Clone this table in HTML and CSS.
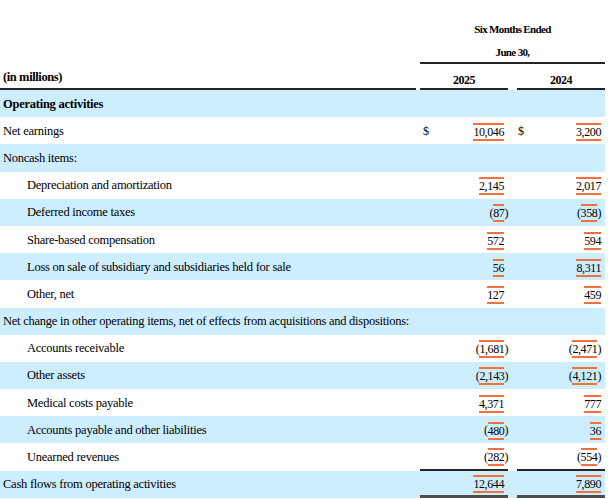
FILE: index.html
```html
<!DOCTYPE html>
<html lang="en">
<head>
<meta charset="utf-8">
<title>Cash flows</title>
<link rel="stylesheet" href="styles.css">
</head>
<body>
<div class="sheet">
  <div class="hrow h1"><div></div><div class="period">Six Months Ended</div></div>
  <div class="hrow h2"><div></div><div class="period ruled">June 30,</div></div>
  <div class="hrow h3"><div class="unit">(in millions)</div><div class="yr c1">2025</div><div class="yr c2">2024</div></div>

  <div class="row blue"><div class="lbl bold">Operating activities</div><div class="v c1"></div><div class="v c2"></div></div>
  <div class="row"><div class="lbl">Net earnings</div><div class="v c1"><span class="cur">$</span><span class="tag">10,046</span></div><div class="v c2"><span class="cur">$</span><span class="tag">3,200</span></div></div>
  <div class="row blue"><div class="lbl">Noncash items:</div><div class="v c1"></div><div class="v c2"></div></div>
  <div class="row"><div class="lbl ind">Depreciation and amortization</div><div class="v c1"><span class="tag">2,145</span></div><div class="v c2"><span class="tag">2,017</span></div></div>
  <div class="row blue"><div class="lbl ind">Deferred income taxes</div><div class="v c1">(<span class="tag">87</span><span class="cp">)</span></div><div class="v c2">(<span class="tag">358</span><span class="cp">)</span></div></div>
  <div class="row"><div class="lbl ind">Share-based compensation</div><div class="v c1"><span class="tag">572</span></div><div class="v c2"><span class="tag">594</span></div></div>
  <div class="row blue"><div class="lbl ind">Loss on sale of subsidiary and subsidiaries held for sale</div><div class="v c1"><span class="tag">56</span></div><div class="v c2"><span class="tag">8,311</span></div></div>
  <div class="row"><div class="lbl ind">Other, net</div><div class="v c1"><span class="tag">127</span></div><div class="v c2"><span class="tag">459</span></div></div>
  <div class="row blue"><div class="lbl">Net change in other operating items, net of effects from acquisitions and dispositions:</div><div class="v c1"></div><div class="v c2"></div></div>
  <div class="row"><div class="lbl ind">Accounts receivable</div><div class="v c1">(<span class="tag">1,681</span><span class="cp">)</span></div><div class="v c2">(<span class="tag">2,471</span><span class="cp">)</span></div></div>
  <div class="row blue"><div class="lbl ind">Other assets</div><div class="v c1">(<span class="tag">2,143</span><span class="cp">)</span></div><div class="v c2">(<span class="tag">4,121</span><span class="cp">)</span></div></div>
  <div class="row"><div class="lbl ind">Medical costs payable</div><div class="v c1"><span class="tag">4,371</span></div><div class="v c2"><span class="tag">777</span></div></div>
  <div class="row blue"><div class="lbl ind">Accounts payable and other liabilities</div><div class="v c1">(<span class="tag">480</span><span class="cp">)</span></div><div class="v c2"><span class="tag">36</span></div></div>
  <div class="row"><div class="lbl ind">Unearned revenues</div><div class="v c1 sub">(<span class="tag">282</span><span class="cp">)</span></div><div class="v c2 sub">(<span class="tag">554</span><span class="cp">)</span></div></div>
  <div class="row blue"><div class="lbl">Cash flows from operating activities</div><div class="v c1 total"><span class="tag">12,644</span></div><div class="v c2 total"><span class="tag">7,890</span></div></div>
</div>
</body>
</html>
```

FILE: styles.css
```css
* { box-sizing: border-box; }

html, body {
  margin: 0;
  padding: 0;
  background: #ffffff;
}

body {
  font-family: "Liberation Serif", "Times New Roman", serif;
  color: #000000;
  width: 608px;
  height: 499px;
  overflow: hidden;
}

.sheet {
  width: 605px;
}

.hrow,
.row {
  display: grid;
  grid-template-columns: 416px 96px 93px;
}

.period {
  grid-column: 2 / 4;
  margin-left: 4px;
  text-align: center;
  font-weight: bold;
  font-size: 11px;
  letter-spacing: -0.65px;
  line-height: 14px;
}

.h1 {
  height: 41px;
  align-items: end;
}

.h1 .period {
  padding-bottom: 5px;
}

.h2 {
  height: 23px;
}

.h2 .period {
  display: flex;
  align-items: center;
  justify-content: center;
}

.ruled {
  border-bottom: 2px solid #262626;
}

.h3 {
  height: 26px;
}

.unit {
  font-weight: bold;
  font-size: 12.5px;
  letter-spacing: -0.4px;
  line-height: 14px;
  padding: 0 0 4px 3px;
  display: flex;
  align-items: flex-end;
  border-bottom: 2px solid #262626;
}

.yr {
  font-weight: bold;
  font-size: 12px;
  letter-spacing: -0.5px;
  line-height: 14px;
  display: flex;
  align-items: flex-end;
  justify-content: center;
  padding-bottom: 1px;
  border-bottom: 2px solid #262626;
}

.row {
  height: 27.2px;
}

.blue {
  background: #cdeeff;
}

.lbl {
  display: flex;
  align-items: center;
  padding: 1px 0 0 3px;
  font-size: 12.5px;
  letter-spacing: -0.25px;
  white-space: nowrap;
}

.lbl.ind {
  padding-left: 27px;
}

.bold {
  font-weight: bold;
}

.c1 {
  margin: 0 4px;
}

.c2 {
  margin-left: 5px;
}

.v {
  display: flex;
  align-items: center;
  justify-content: flex-end;
  padding-top: 2px;
  font-size: 12px;
  letter-spacing: -0.4px;
  white-space: nowrap;
}

.v.c1 {
  padding-left: 3px;
  padding-right: 4px;
}

.v.c2 {
  padding-left: 1px;
  padding-right: 4px;
}

.cur {
  margin-right: auto;
}

.tag {
  display: inline-block;
  line-height: 12px;
  padding: 1px 0;
  border-top: 2px solid #f3703f;
  border-bottom: 2px solid #f3703f;
}

.c1 .cp {
  margin-right: -4px;
}

.sub {
  border-bottom: 2px solid #262626;
}

.total {
  border-bottom: 3px solid #4d4d4d;
}
```
